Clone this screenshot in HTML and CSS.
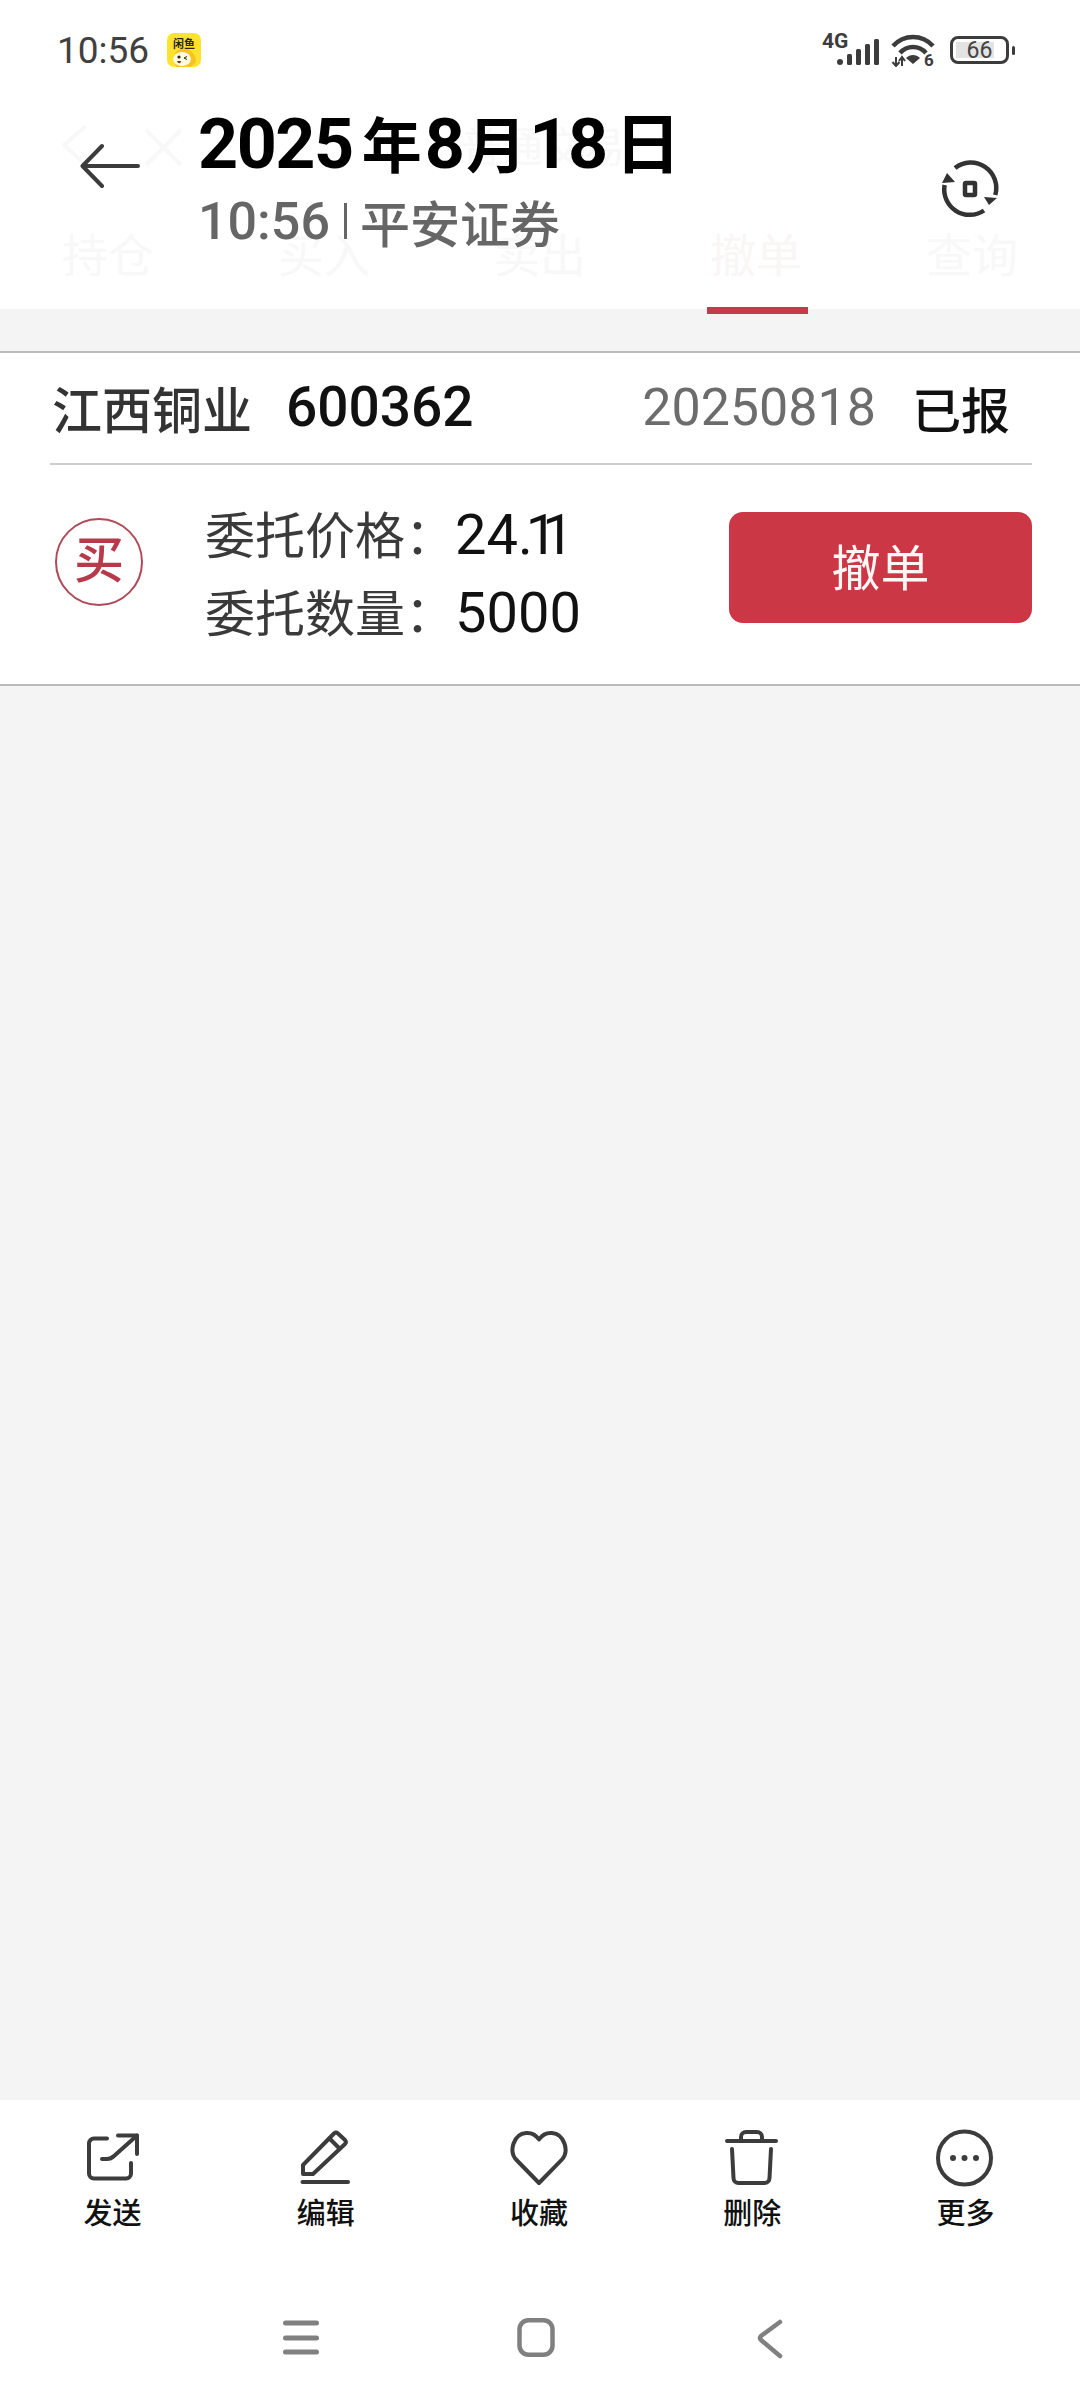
FILE: index.html
```html
<!DOCTYPE html>
<html lang="zh">

<head>
    <meta charset="utf-8">
    <meta name="viewport" content="width=device-width, initial-scale=1.0">
    <title>撤单</title>
    <link rel="stylesheet" href="styles.css">
</head>

<body>

    <div class="phone">
        <header>
            <!-- faint page behind the title, left over from the screenshot overlay -->
            <div class="ghost-title">
                <svg width="120" height="44" viewBox="0 0 120 44">
                    <path d="M24 1 L2 20 L24 40 M84 5 L119 40 M119 5 L84 40" fill="none" stroke="#f8f8f8" stroke-width="4" />
                </svg>
                <span class="ghost-name">普通交易</span>
            </div>
            <div class="ghost-tabs">
                <span>持仓</span>
                <span>买入</span>
                <span>卖出</span>
                <span class="ghost-on">撤单</span>
                <span>查询</span>
            </div>
            <div class="tab-line"></div>

            <div class="statusbar">
                <span class="clock">10:56</span>
                <svg class="app-icon" width="34" height="34" viewBox="0 0 34 34">
                    <rect width="34" height="34" rx="7" fill="#ffe22e" />
                    <text x="17" y="15" text-anchor="middle" class="app-icon-text">闲鱼</text>
                    <path d="M6 26 C7 18 13 15 19 16 C25 17 29 22 29 29 C27 32 24 34 20 34 H10 C8 31 6 29 6 26Z" fill="#f6c41f" />
                    <ellipse cx="15" cy="26" rx="9" ry="7" fill="#fffbe0" />
                    <circle cx="12" cy="24" r="1.6" fill="#2b2416" />
                    <path d="M17 25 L20 23.5 M17 25 L20 26.5" stroke="#2b2416" stroke-width="1" fill="none" />
                    <path d="M10 28 H14 C14 31 11 31 10 28Z" fill="#6b3a14" />
                </svg>
                <div class="status-right">
                    <div class="net">
                        <span class="net-label">4G</span>
                        <svg width="44" height="28" viewBox="0 0 44 28">
                            <g fill="#3c3c3c">
                                <rect x="1" y="21" width="6" height="6" rx="3" />
                                <rect x="11" y="16" width="5" height="11" rx="1.5" />
                                <rect x="20" y="11" width="5" height="16" rx="1.5" />
                                <rect x="29" y="6" width="5" height="21" rx="1.5" />
                                <rect x="38" y="1" width="5" height="26" rx="1.5" />
                            </g>
                        </svg>
                    </div>
                    <svg class="wifi" width="44" height="34" viewBox="0 0 44 34">
                        <g fill="none" stroke="#3c3c3c" stroke-width="4.500">
                            <path d="M2 13 C13 1 31 1 42 13" />
                            <path d="M9 20 C16 12 28 12 35 20" />
                        </g>
                        <path d="M15 25 C19 21 25 21 29 25 L22 31Z" fill="#3c3c3c" />
                        <path d="M5 24 V33 M1.5 29 L5 33 L8.500 29 M11 33 V24 M8 28 L11 24 L14 28" fill="none" stroke="#3c3c3c" stroke-width="2" />
                        <text x="38" y="33" text-anchor="middle" class="wifi-six">6</text>
                    </svg>
                    <div class="battery">
                        <div class="battery-box">
                            <div class="battery-fill"></div>
                            <span class="battery-num">66</span>
                        </div>
                        <div class="battery-cap"></div>
                    </div>
                </div>
            </div>

            <div class="titlebar">
                <svg class="back" width="60" height="46" viewBox="0 0 60 46">
                    <path d="M58 23 H3 M22 3 L2.500 23 L22 43" fill="none" stroke="#3c3c3c" stroke-width="4" stroke-linecap="round" stroke-linejoin="round" />
                </svg>
                <div class="title-text">
                    <div class="title-date">2025<span class="cn cn-first">年</span>8<span class="cn">月</span>18<span class="cn cn-last">日</span></div>
                    <div class="title-sub">10:56<span class="sub-bar"></span><span class="sub-name">平安证券</span></div>
                </div>
                <svg class="rotate" width="60" height="60" viewBox="0 0 60 60">
                    <g fill="none" stroke="#333" stroke-width="4.500">
                        <path d="M15 9 A25.500 25.500 0 0 1 55.300 36" />
                        <path d="M44 51.500 A25.500 25.500 0 0 1 4.600 26" />
                    </g>
                    <path d="M7 14 L15 23 L2 24 Z M49 46 L44 38 L57 39 Z" fill="#333" />
                    <rect x="25" y="24" width="10" height="12" rx="1" fill="none" stroke="#333" stroke-width="4.500" />
                </svg>
            </div>
        </header>

        <main>
            <section class="order">
                <div class="order-head">
                    <span class="stock-name">江西铜业</span>
                    <span class="stock-code">600362</span>
                    <span class="order-date">20250818</span>
                    <span class="order-state">已报</span>
                </div>
                <div class="order-body">
                    <div class="buy-badge">买</div>
                    <div class="order-info">
                        <div class="info-row">委托价格：<span class="info-val">24.<span class="info-ones">11</span></span></div>
                        <div class="info-row">委托数量：<span class="info-val">5000</span></div>
                    </div>
                    <button class="cancel">撤单</button>
                </div>
            </section>
        </main>

        <div class="toolbar">
            <div class="tool">
                <svg width="60" height="60" viewBox="0 0 60 60">
                    <g class="tool-line">
                        <path d="M24 11.500 H11 a5 5 0 0 0 -5 5 V46.500 a5 5 0 0 0 5 5 H43 a5 5 0 0 0 5 -5 V36" />
                        <path d="M35 8.500 H54 V27" />
                        <path d="M19 32 H24 c3 0 5 -1 7 -3 L54 8.500" />
                    </g>
                </svg>
                <span>发送</span>
            </div>
            <div class="tool">
                <svg width="60" height="60" viewBox="0 0 60 60">
                    <g class="tool-line">
                        <path d="M7 47 V38 L38 6.500 a3 3 0 0 1 4 0 L49 13 a3 3 0 0 1 0 4 L17 47 Z" />
                        <path d="M33.500 11.500 L43.500 21.500" />
                        <path d="M6.500 55 H52" />
                    </g>
                </svg>
                <span>编辑</span>
            </div>
            <div class="tool">
                <svg width="60" height="60" viewBox="0 0 60 60">
                    <g class="tool-line">
                        <path d="M30 56 L7.500 33 C-1 24 5 7 17 6 C23 5.500 27 8 30 12.500 C33 8 37 5.500 43 6 C55 7 61 24 52.500 33 Z" />
                    </g>
                </svg>
                <span>收藏</span>
            </div>
            <div class="tool">
                <svg width="60" height="60" viewBox="0 0 60 60">
                    <g class="tool-line">
                        <path d="M5 14 H54" />
                        <path d="M19 13 V10 a5 5 0 0 1 5 -5 H35 a5 5 0 0 1 5 5 V13" />
                        <path d="M10 22 L11.500 51 a5 5 0 0 0 5 5 H42.500 a5 5 0 0 0 5 -5 L49 22" />
                    </g>
                </svg>
                <span>删除</span>
            </div>
            <div class="tool">
                <svg width="60" height="60" viewBox="0 0 60 60">
                    <circle cx="29.500" cy="31" r="26.500" class="tool-line" />
                    <g fill="#3c3c3c">
                        <circle cx="18" cy="31" r="3" />
                        <circle cx="29.500" cy="31" r="3" />
                        <circle cx="41" cy="31" r="3" />
                    </g>
                </svg>
                <span>更多</span>
            </div>
        </div>

        <nav class="navbar">
            <svg width="40" height="44" viewBox="0 0 40 44">
                <path d="M4.500 7 H35.500 M4.500 22 H35.500 M4.500 36 H35.500" fill="none" stroke="#808080" stroke-width="5" stroke-linecap="round" />
            </svg>
            <svg width="40" height="44" viewBox="0 0 40 44">
                <rect x="3.500" y="4.250" width="33" height="34.500" rx="9" fill="none" stroke="#808080" stroke-width="4.500" />
            </svg>
            <svg width="40" height="44" viewBox="0 0 40 44">
                <path d="M29 6 L10 20 Q8 22 10 24 L29 40" fill="none" stroke="#808080" stroke-width="4.500" stroke-linecap="round" />
            </svg>
        </nav>
    </div>

</body></html>
```

FILE: styles.css
```css
body {
    margin: 0;
    padding: 0;
    background: #f4f4f4;
    font-family: Roboto, "Noto Sans CJK SC", sans-serif;
}

.phone {
    width: 1080px;
    height: 2400px;
    display: flex;
    flex-direction: column;
    overflow: hidden;
}

header {
    position: relative;
    height: 309px;
    background-color: #ffffff;
}

.ghost-title {
    position: absolute;
    top: 125px;
    left: 62px;
    display: flex;
}

.ghost-name {
    margin-left: 279px;
    font-size: 41px;
    line-height: 46px;
    color: #f8f8f8;
}

.ghost-tabs {
    position: absolute;
    top: 224px;
    left: 0;
    width: 1080px;
    display: grid;
    grid-template-columns: repeat(5, 1fr);
    text-align: center;
    font-size: 46px;
    line-height: 64px;
    color: #f8f8f8;
}

.ghost-on {
    color: #faf6f6;
}

.tab-line {
    position: absolute;
    left: 707px;
    top: 307px;
    width: 101px;
    height: 7px;
    background-color: #c43b4b;
}

.statusbar {
    position: relative;
    height: 100px;
    display: flex;
    align-items: center;
    padding-left: 57px;
    padding-right: 65px;
}

.clock {
    font-size: 37px;
    color: #404040;
}

.app-icon {
    margin-left: 18px;
}

.app-icon-text {
    font-size: 11px;
    font-weight: 700;
    fill: #2b2416;
}

.status-right {
    margin-left: auto;
    display: flex;
    align-items: center;
}

.net {
    position: relative;
    width: 58px;
    height: 32px;
    display: flex;
    justify-content: flex-end;
    align-items: flex-end;
}

.net-label {
    position: absolute;
    left: 0;
    top: -5px;
    font-size: 21px;
    font-weight: 700;
    color: #3c3c3c;
}

.wifi {
    margin-left: 11px;
}

.wifi-six {
    font-size: 17px;
    font-weight: 700;
    fill: #3c3c3c;
}

.battery {
    margin-left: 15px;
    display: flex;
    align-items: center;
}

.battery-box {
    position: relative;
    width: 53px;
    height: 22px;
    border: 3px solid #3c3c3c;
    border-radius: 8px;
}

.battery-fill {
    position: absolute;
    left: 3px;
    top: 3px;
    bottom: 3px;
    width: 38px;
    background-color: #e3e3e3;
}

.battery-num {
    position: absolute;
    left: 0;
    right: 0;
    top: 0;
    text-align: center;
    font-size: 23px;
    line-height: 23px;
    color: #444444;
}

.battery-cap {
    width: 3px;
    height: 9px;
    margin-left: 3px;
    border-radius: 2px;
    background-color: #3c3c3c;
}

.titlebar {
    position: relative;
    display: flex;
    align-items: flex-start;
    padding-top: 5px;
}

.back {
    margin-left: 80px;
    margin-top: 38px;
}

.title-text {
    margin-left: 58px;
}

.title-date {
    font-size: 70px;
    line-height: 78px;
    font-weight: 700;
    letter-spacing: -1.500px;
    color: #000000;
}

.title-date .cn {
    font-size: 60px;
    letter-spacing: 0;
    margin: 0 3px;
}

.title-date .cn-first {
    margin-left: 9px;
}

.title-date .cn-last {
    font-size: 66px;
    margin-left: 8px;
}

.title-sub {
    display: flex;
    align-items: center;
    height: 72px;
    margin-top: -2px;
    font-size: 52px;
    font-weight: 500;
    color: #666666;
}

.sub-bar {
    width: 3px;
    height: 36px;
    margin: 0 13px 0 14px;
    background-color: #666666;
}

.sub-name {
    font-size: 50px;
}

.rotate {
    margin-left: auto;
    margin-right: 80px;
    margin-top: 54px;
}

main {
    flex: 1;
    padding-top: 42px;
}

.order {
    background-color: #ffffff;
    border-top: 2px solid #bbbbbb;
    border-bottom: 2px solid #bbbbbb;
}

.order-head {
    height: 112px;
    box-sizing: border-box;
    margin: 0 48px 0 50px;
    padding: 0 22px 2px 2px;
    display: flex;
    align-items: center;
    border-bottom: 2px solid #cccccc;
}

.stock-name {
    font-size: 50px;
    font-weight: 500;
    color: #333333;
}

.stock-code {
    margin-left: 34px;
    font-size: 55px;
    font-weight: 500;
    color: #111111;
}

.order-date {
    margin-left: auto;
    font-size: 52px;
    color: #6c6c6c;
}

.order-state {
    margin-left: 36px;
    font-size: 49px;
    font-weight: 500;
    color: #111111;
}

.order-body {
    height: 219px;
    padding: 0 48px 0 55px;
    display: flex;
    align-items: flex-start;
}

.buy-badge {
    width: 84px;
    height: 84px;
    margin-top: 53px;
    border: 2px solid #b04a58;
    border-radius: 50%;
    text-align: center;
    font-size: 50px;
    font-weight: 500;
    line-height: 82px;
    color: #b83a4a;
}

.order-info {
    margin-left: 62px;
    margin-top: 32px;
}

.info-row {
    font-size: 50px;
    line-height: 76px;
    color: #3a3a3a;
}

.info-val {
    font-size: 56px;
    color: #111111;
}

.info-ones {
    margin-left: -7px;
    letter-spacing: -15px;
}

.cancel {
    margin-left: auto;
    margin-top: 47px;
    width: 303px;
    height: 111px;
    padding-bottom: 8px;
    border: 0;
    border-radius: 14px;
    background-color: #cb3745;
    font-family: inherit;
    font-size: 49px;
    color: #fff6f6;
}

.toolbar {
    height: 200px;
    box-sizing: border-box;
    padding: 27px 8px 0 6px;
    background-color: #ffffff;
    display: grid;
    grid-template-columns: repeat(5, 1fr);
}

.tool {
    display: flex;
    flex-direction: column;
    align-items: center;
    font-size: 29px;
    line-height: 40px;
    font-weight: 500;
    color: #111111;
}

.tool span {
    margin-top: 7px;
}

.tool-line {
    fill: none;
    stroke: #3c3c3c;
    stroke-width: 4px;
    stroke-linecap: round;
    stroke-linejoin: round;
}

.navbar {
    height: 100px;
    box-sizing: border-box;
    padding: 16px 8px 0 0;
    background-color: #ffffff;
    display: flex;
    justify-content: center;
    align-items: flex-start;
    gap: 195px;
}
```
